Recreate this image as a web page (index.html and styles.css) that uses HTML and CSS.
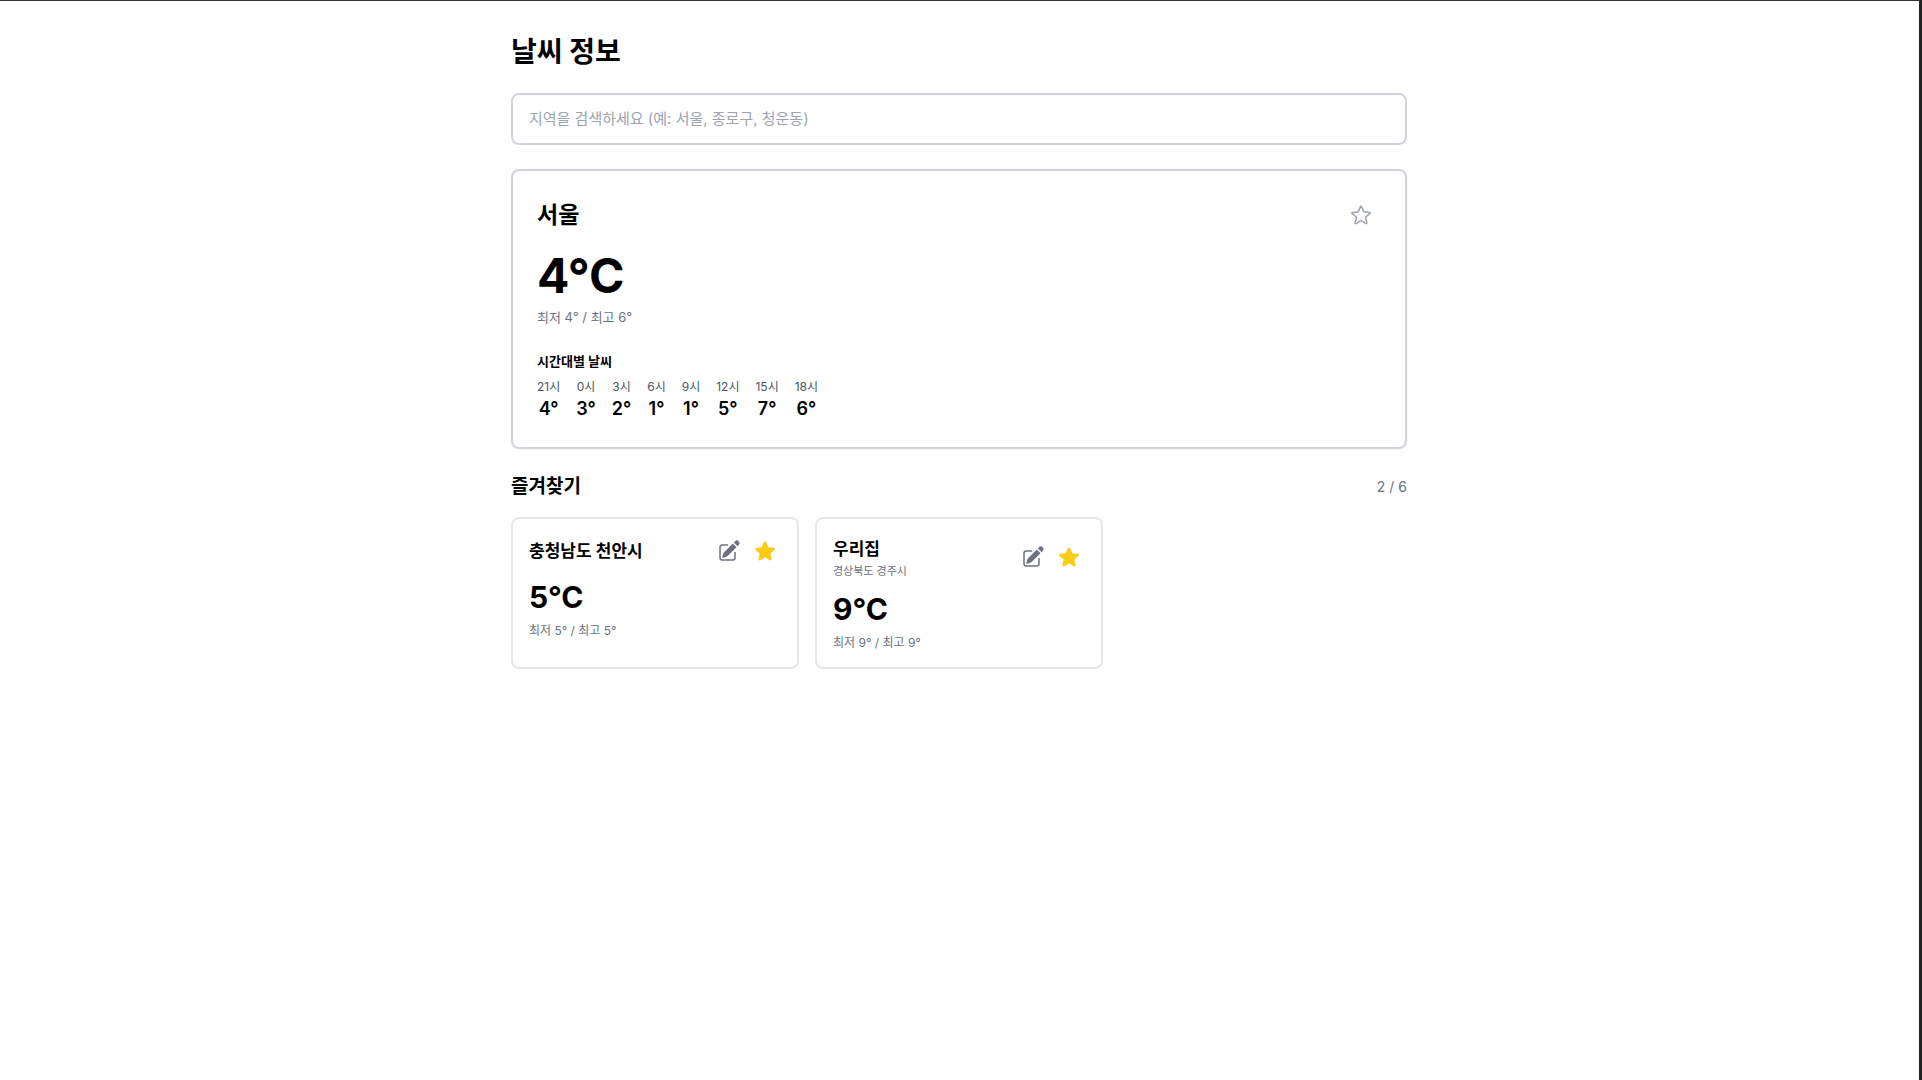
FILE: index.html
```html
<!DOCTYPE html>
<html lang="ko">
<head>
  <meta charset="UTF-8" />
  <meta name="viewport" content="width=device-width, initial-scale=1.0" />
  <title>날씨 정보</title>
  <link rel="stylesheet" href="styles.css">
</head>
<body>
  <svg width="0" height="0" class="sprite" aria-hidden="true">
    <symbol id="icon-star" viewBox="0 0 24 24">
      <path d="M10.788 3.21c.448-1.077 1.976-1.077 2.424 0l2.082 5.006 5.404.434c1.164.093 1.636 1.545.749 2.305l-4.117 3.527 1.257 5.273c.271 1.136-.964 2.033-1.96 1.425L12 18.354 7.373 21.18c-.996.608-2.231-.29-1.96-1.425l1.257-5.273-4.117-3.527c-.887-.76-.415-2.212.749-2.305l5.404-.434 2.082-5.005Z" />
    </symbol>
    <symbol id="icon-edit" viewBox="0 0 24 24">
      <path d="M21.731 2.269a2.625 2.625 0 0 0-3.712 0l-1.157 1.157 3.712 3.712 1.157-1.157a2.625 2.625 0 0 0 0-3.712ZM19.513 8.199l-3.712-3.712-8.4 8.4a5.25 5.25 0 0 0-1.32 2.214l-.8 2.685a.75.75 0 0 0 .933.933l2.685-.8a5.25 5.25 0 0 0 2.214-1.32l8.4-8.4Z" />
      <path d="M5.25 5.25a3 3 0 0 0-3 3v10.5a3 3 0 0 0 3 3h10.5a3 3 0 0 0 3-3V13.5a.75.75 0 0 0-1.5 0v5.25a1.5 1.5 0 0 1-1.5 1.5H5.25a1.5 1.5 0 0 1-1.5-1.5V8.25a1.5 1.5 0 0 1 1.5-1.5h5.25a.75.75 0 0 0 0-1.5H5.25Z" />
    </symbol>
  </svg>

  <main class="container">
    <h1>날씨 정보</h1>

    <input class="search" type="text" aria-label="지역 검색" placeholder="지역을 검색하세요 (예: 서울, 종로구, 청운동)">

    <section class="weather-card">
      <div class="card-header">
        <h2>서울</h2>
        <button type="button" class="icon-btn large" aria-label="즐겨찾기 추가">
          <svg class="star-outline" viewBox="0 0 24 24">
            <path d="M11.48 3.499a.562.562 0 0 1 1.04 0l2.125 5.111a.563.563 0 0 0 .475.345l5.518.442c.499.04.701.663.321.988l-4.204 3.602a.563.563 0 0 0-.182.557l1.285 5.385a.562.562 0 0 1-.84.61l-4.725-2.885a.562.562 0 0 0-.586 0L6.982 20.54a.562.562 0 0 1-.84-.61l1.285-5.386a.562.562 0 0 0-.182-.557l-4.204-3.602a.562.562 0 0 1 .321-.988l5.518-.442a.563.563 0 0 0 .475-.345L11.48 3.5Z" />
          </svg>
        </button>
      </div>
      <p class="temp">4°C</p>
      <p class="range">최저 4° / 최고 6°</p>

      <h3>시간대별 날씨</h3>
      <ul class="hourly">
        <li><span>21시</span><strong>4°</strong></li>
        <li><span>0시</span><strong>3°</strong></li>
        <li><span>3시</span><strong>2°</strong></li>
        <li><span>6시</span><strong>1°</strong></li>
        <li><span>9시</span><strong>1°</strong></li>
        <li><span>12시</span><strong>5°</strong></li>
        <li><span>15시</span><strong>7°</strong></li>
        <li><span>18시</span><strong>6°</strong></li>
      </ul>
    </section>

    <section>
      <div class="favorites-header">
        <h2>즐겨찾기</h2>
        <span>2 / 6</span>
      </div>
      <div class="favorites">
        <article class="favorite">
          <div class="card-header">
            <h3>충청남도 천안시</h3>
            <div class="actions">
              <button type="button" class="icon-btn edit" aria-label="이름 수정"><svg><use href="#icon-edit" /></svg></button>
              <button type="button" class="icon-btn star" aria-label="즐겨찾기 해제"><svg><use href="#icon-star" /></svg></button>
            </div>
          </div>
          <p class="temp">5°C</p>
          <p class="range">최저 5° / 최고 5°</p>
        </article>
        <article class="favorite">
          <div class="card-header">
            <div>
              <h3>우리집</h3>
              <p class="address">경상북도 경주시</p>
            </div>
            <div class="actions">
              <button type="button" class="icon-btn edit" aria-label="이름 수정"><svg><use href="#icon-edit" /></svg></button>
              <button type="button" class="icon-btn star" aria-label="즐겨찾기 해제"><svg><use href="#icon-star" /></svg></button>
            </div>
          </div>
          <p class="temp">9°C</p>
          <p class="range">최저 9° / 최고 9°</p>
        </article>
      </div>
    </section>
  </main>
</body>
</html>
```
FILE: styles.css
```css
* {
  box-sizing: border-box;
  margin: 0;
  padding: 0;
}
body {
  min-height: 100vh;
  padding-right: 1px;
  border-top: 1px solid #333;
  border-right: 3px solid #222;
  background: #fff;
  color: #000;
  font-family: Inter, "Noto Sans CJK KR", sans-serif;
}
.sprite {
  position: absolute;
}
.container {
  max-width: 928px;
  margin: 0 auto;
  padding: 32px 16px;
}
h1 {
  margin-bottom: 22px;
  font-size: 28px;
  line-height: 38px;
}
.search {
  display: block;
  width: 100%;
  margin-bottom: 24px;
  padding: 11px 16px 13px;
  border: 2px solid #d1d5db;
  border-radius: 8px;
  font-family: inherit;
  font-size: 15px;
  line-height: 24px;
  height: 52px;
}
.search::placeholder {
  color: #9ca3af;
}
.weather-card {
  margin-bottom: 24px;
  padding: 24px;
  border: 2px solid #d1d5db;
  border-radius: 8px;
  box-shadow: 0 1px 2px rgba(0, 0, 0, 0.05);
}
.card-header {
  display: flex;
  justify-content: space-between;
  align-items: center;
}
.weather-card .card-header {
  margin-bottom: 16px;
}
.weather-card h2 {
  font-size: 23px;
  line-height: 32px;
}
.range {
  margin-top: 8px;
  color: #6b7280;
}
.weather-card .temp {
  font-size: 48px;
  font-weight: 700;
  line-height: 50px;
}
.weather-card .range {
  margin-top: 6px;
  font-size: 13px;
  line-height: 20px;
}
.weather-card h3 {
  margin: 24px 0 8px;
  font-size: 13px;
  font-weight: 600;
  line-height: 20px;
}
.icon-btn {
  display: block;
  padding: 4px;
  border: 0;
  background: none;
  cursor: pointer;
}
.icon-btn.large {
  padding: 8px;
}
.icon-btn svg {
  display: block;
  width: 24px;
  height: 24px;
  fill: currentColor;
}
.icon-btn .star-outline {
  fill: none;
  stroke: #9ca3af;
  stroke-width: 1.5;
  stroke-linecap: round;
  stroke-linejoin: round;
}
.edit {
  color: #6b7280;
}
.star {
  color: #facc15;
}
.hourly {
  display: flex;
  gap: 16px;
  list-style: none;
}
.hourly li {
  display: flex;
  flex-direction: column;
  align-items: center;
}
.hourly span {
  color: #4b5563;
  font-size: 12px;
  line-height: 16px;
}
.hourly strong {
  font-size: 18px;
  font-weight: 600;
  line-height: 28px;
}
.favorites-header {
  display: flex;
  justify-content: space-between;
  align-items: center;
  margin-bottom: 16px;
}
.favorites-header h2 {
  font-size: 19px;
  line-height: 28px;
}
.favorites-header span {
  color: #6b7280;
  font-size: 14px;
  line-height: 20px;
}
.favorites {
  display: grid;
  grid-template-columns: repeat(3, 1fr);
  gap: 16px;
}
.favorite {
  padding: 16px;
  border: 2px solid #e5e7eb;
  border-radius: 8px;
}
.favorite .card-header {
  margin-bottom: 12px;
}
.favorite h3 {
  font-size: 17px;
  font-weight: 600;
  line-height: 28px;
}
.address {
  color: #6b7280;
  font-size: 11px;
  line-height: 16px;
}
.actions {
  display: flex;
  gap: 4px;
}
.favorite .temp {
  font-size: 30px;
  font-weight: 700;
  line-height: 36px;
}
.favorite .range {
  font-size: 12px;
  line-height: 16px;
}
@media (max-width: 768px) {
  .favorites {
    grid-template-columns: 1fr;
  }
}
```
